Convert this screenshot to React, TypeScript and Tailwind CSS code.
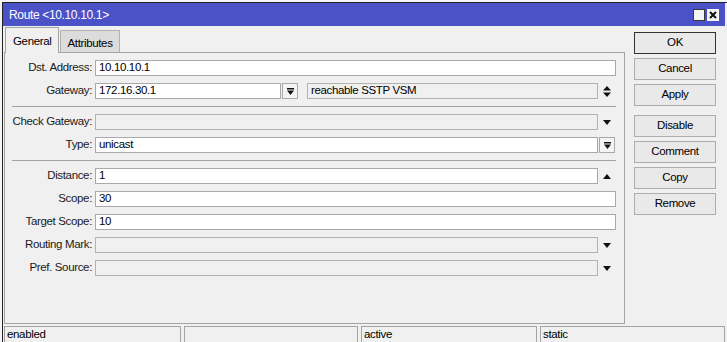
import type { ReactNode } from 'react';

// small glyphs used next to the fields
function DownArrow() {
  return (
    <svg width="8" height="5" viewBox="0 0 8 5">
      <polygon points="0,0 8,0 4,5" fill="#111" />
    </svg>
  );
}

function UpArrow() {
  return (
    <svg width="8" height="5" viewBox="0 0 8 5">
      <polygon points="0,5 8,5 4,0" fill="#111" />
    </svg>
  );
}

function UpDownArrows() {
  return (
    <svg width="8" height="11" viewBox="0 0 8 11">
      <polygon points="0,4.5 8,4.5 4,0" fill="#111" />
      <polygon points="0,6.5 8,6.5 4,11" fill="#111" />
    </svg>
  );
}

function BarDown() {
  return (
    <svg width="7" height="7" viewBox="0 0 7 7">
      <rect x="0" y="0" width="7" height="1.5" fill="#111" />
      <polygon points="0,2.5 7,2.5 3.5,7" fill="#111" />
    </svg>
  );
}

interface FieldProps {
  value?: string;
  disabled?: boolean;
  className?: string;
}

function Field({ value, disabled, className = '' }: FieldProps) {
  return (
    <div
      className={`h-[16px] border flex items-center px-[3px] leading-none whitespace-nowrap ${
        disabled ? 'bg-[#f0f0f0] border-[#b2b2b2]' : 'bg-white border-[#a9a9a9]'
      } ${className}`}
    >
      {value}
    </div>
  );
}

function Row({ label, children }: { label: string; children: ReactNode }) {
  return (
    <div className="h-[16px] flex items-center">
      <div className="w-[88px] text-right pr-[1px] text-[#1a1a1a] whitespace-nowrap">{label}</div>
      <div className="flex-1 flex items-center ml-[2px] h-full">{children}</div>
    </div>
  );
}

function IconCell({ children }: { children: ReactNode }) {
  return <div className="w-[18px] h-full flex items-center justify-center">{children}</div>;
}

function DropButton() {
  return (
    <div className="w-[16px] h-[16px] border border-[#a9a9a9] bg-[#f4f4f4] flex items-center justify-center">
      <BarDown />
    </div>
  );
}

function Separator() {
  return <div className="h-px bg-[#a4a4a4] ml-[7px]" />;
}

const buttons = ['OK', 'Cancel', 'Apply', 'Disable', 'Comment', 'Copy', 'Remove'];

export default function App() {
  return (
    <div className="w-[727px] h-[342px] bg-[#f5f5f5] pt-[2px] pl-[2px] overflow-hidden font-['Liberation_Sans',Arial,sans-serif] text-[11.5px] tracking-[-0.35px] text-black">
      <div className="w-[725px] h-[340px] border-l border-t border-[#222] bg-[#f0f0f0] flex flex-col">
        {/* Title bar */}
        <div className="h-[23px] mr-[2px] bg-[#4b51c7] flex items-center pl-[6px] pr-[6px]">
          <span className="text-white text-[12px]">Route &lt;10.10.10.1&gt;</span>
          <div className="ml-auto flex items-center gap-[2px]">
            <div className="w-[12px] h-[12px] bg-[#f4f4f4] border border-[#3a3a3a]" />
            <div className="w-[12px] h-[12px] bg-[#f4f4f4] flex items-center justify-center">
              <svg width="8" height="8" viewBox="0 0 8 8">
                <path d="M1 1 L7 7 M7 1 L1 7" stroke="#111" strokeWidth="2" />
              </svg>
            </div>
          </div>
        </div>

        <div className="flex flex-1">
          {/* Tabs and panel */}
          <div className="w-[621px] ml-[1px] flex flex-col">
            <div className="h-[26px] flex items-end pl-[1px]">
              <div className="relative z-10 h-[26px] mb-[-1px] px-[7px] pt-[5px] border border-b-0 border-[#a4a4a4] bg-[#f0f0f0]">
                General
              </div>
              <div className="h-[22px] ml-[1px] px-[6px] pt-[4px] border border-b-0 border-[#b0b0b0] bg-[#dcdcdc]">
                Attributes
              </div>
            </div>
            <div className="h-[272px] border border-[#a4a4a4] pt-[7px] pr-[8px] flex flex-col gap-[7px]">
              <Row label="Dst. Address:">
                <Field value="10.10.10.1" className="flex-1" />
              </Row>
              <Row label="Gateway:">
                <Field value="172.16.30.1" className="w-[186px]" />
                <div className="ml-[1px]">
                  <DropButton />
                </div>
                <Field value="reachable SSTP VSM" disabled className="flex-1 ml-[9px]" />
                <IconCell>
                  <UpDownArrows />
                </IconCell>
              </Row>
              <Separator />
              <Row label="Check Gateway:">
                <Field disabled className="flex-1" />
                <IconCell>
                  <DownArrow />
                </IconCell>
              </Row>
              <Row label="Type:">
                <Field value="unicast" className="flex-1" />
                <div className="w-[18px] pl-[1px]">
                  <DropButton />
                </div>
              </Row>
              <Separator />
              <Row label="Distance:">
                <Field value="1" className="flex-1" />
                <IconCell>
                  <UpArrow />
                </IconCell>
              </Row>
              <Row label="Scope:">
                <Field value="30" className="flex-1" />
              </Row>
              <Row label="Target Scope:">
                <Field value="10" className="flex-1" />
              </Row>
              <Row label="Routing Mark:">
                <Field disabled className="flex-1" />
                <IconCell>
                  <DownArrow />
                </IconCell>
              </Row>
              <Row label="Pref. Source:">
                <Field disabled className="flex-1" />
                <IconCell>
                  <DownArrow />
                </IconCell>
              </Row>
            </div>
          </div>

          {/* Buttons */}
          <div className="ml-[9px] w-[82px] pt-[6px] flex flex-col gap-[4px]">
            {buttons.map((b) => (
              <div
                key={b}
                className={`h-[22px] flex items-center justify-center bg-[#e9e9e9] border ${
                  b === 'OK' ? 'border-[#333]' : 'border-[#adadad]'
                } ${b === 'Disable' ? 'mt-[5px]' : ''}`}
              >
                {b}
              </div>
            ))}
          </div>
        </div>

        {/* Status bar */}
        <div className="h-[16px] mt-[2px] pl-[1px] flex gap-[3px]">
          <div className="w-[177px] border-t border-l border-r border-[#a4a4a4] px-[2px] leading-[15px]">enabled</div>
          <div className="w-[174px] border-t border-l border-r border-[#a4a4a4]" />
          <div className="w-[176px] border-t border-l border-r border-[#a4a4a4] px-[2px] leading-[15px]">active</div>
          <div className="flex-1 mr-[2px] border-t border-l border-r border-[#a4a4a4] px-[2px] leading-[15px]">static</div>
        </div>
      </div>
    </div>
  );
}
